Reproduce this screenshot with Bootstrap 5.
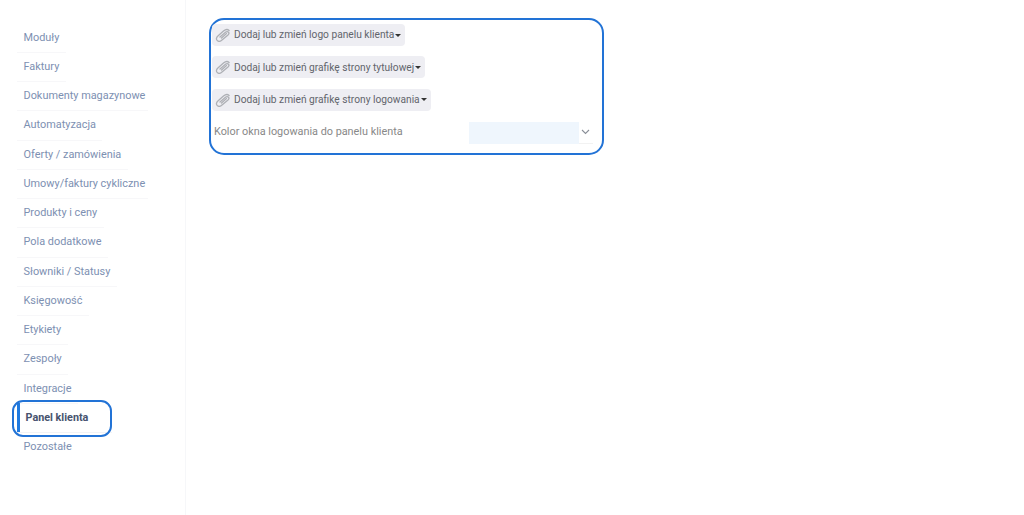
<!DOCTYPE html>
<html lang="pl">
<head>
<meta charset="utf-8">
<title>Panel klienta</title>
<link href="https://cdn.jsdelivr.net/npm/bootstrap@5.3.0/dist/css/bootstrap.min.css" rel="stylesheet">
<style>
html,body{height:515px;overflow:hidden;background:#fff}
body{font-family:Roboto,"Liberation Sans",sans-serif;font-size:11px;color:#666}
.shell{height:515px}
.side-col{width:186px;flex:none;border-right:1px solid #f6f7f9;padding:23.5px 0 0 17px}
.side-list{width:fit-content;min-width:0}
.side-item{display:block;width:fit-content;height:29.27px;line-height:27.5px;padding:0 6.5px;font-size:10.9px;color:#7d90b2;text-decoration:none;border-bottom:1px solid #f7f7f9}
.side-item.last{border-bottom:0}
.side-item.wide{padding-right:3px}
.side-active{position:relative;color:#47536e;font-weight:700;font-size:10.8px;padding-left:8.5px;padding-right:24px;border-bottom:1px solid #f2f3f6}
.side-active::before{content:"";position:absolute;left:0;top:-1px;bottom:0;width:3px;background:#1f7ae0}
.side-ring{position:absolute;left:-5px;top:-4px;width:100px;height:37px;border:2px solid #2273d6;border-radius:11px;pointer-events:none}
.main-col{padding:18px 0 0 23px}
.frame{width:395px;height:137px;border:2px solid #2273d6;border-radius:15px;padding:4px 1px 0 1px}
.file-btn{display:inline-flex;align-items:center;height:22px;padding:0 4px 0 3px;background:#eeeef3;border:0;border-radius:4px;font-size:10.2px;color:#62656c;white-space:nowrap}
.file-btn svg{margin-right:3px;flex:none}
.caret-mark{width:0;height:0;margin-left:1px;border-left:3px solid transparent;border-right:3px solid transparent;border-top:3px solid #333}
.btn-stack{display:flex;flex-direction:column;align-items:flex-start;gap:10.3px}
.color-row{height:23px;margin-top:10.500px;padding-left:2px}
.color-label{width:255px;flex:none;font-size:10.85px;color:#888}
.color-field{width:110px;height:22px;background:#eff6fd;flex:none}
.color-arrow{flex:1;height:22px;display:flex;align-items:center;padding-left:2px;border-bottom:1px solid #f2f2f2;margin-right:8px}
</style>
</head>
<body>
<div class="shell d-flex">
  <nav class="side-col">
    <div class="side-list position-relative">
      <a class="side-item" href="#">Moduły</a>
      <a class="side-item" href="#">Faktury</a>
      <a class="side-item wide" href="#">Dokumenty magazynowe</a>
      <a class="side-item" href="#">Automatyzacja</a>
      <a class="side-item" href="#">Oferty / zamówienia</a>
      <a class="side-item wide" href="#">Umowy/faktury cykliczne</a>
      <a class="side-item" href="#">Produkty i ceny</a>
      <a class="side-item" href="#">Pola dodatkowe</a>
      <a class="side-item" href="#">Słowniki / Statusy</a>
      <a class="side-item" href="#">Księgowość</a>
      <a class="side-item" href="#">Etykiety</a>
      <a class="side-item" href="#">Zespoły</a>
      <a class="side-item" href="#">Integracje</a>
      <div class="position-relative">
        <a class="side-item side-active" href="#">Panel klienta</a>
        <span class="side-ring"></span>
      </div>
      <a class="side-item last" href="#">Pozostałe</a>
    </div>
  </nav>
  <main class="main-col flex-grow-1">
    <div class="frame">
      <div class="btn-stack">
        <button class="file-btn" type="button"><svg width="16" height="14" viewBox="0 0 16 14" fill="none" stroke="#aeb0b5" stroke-width="1.3" stroke-linecap="round"><path d="M5 9 10.500 4.200c1-.9 2.300-.8 3 0 .7.800.5 1.900-.5 2.800L7 12c-1.700 1.500-3.800 1.600-4.900.4-1.100-1.200-.8-3 .8-4.400L8.500 3.100c2-1.700 4.200-1.900 5.600-.6"/><path d="M6.500 10 11.500 5.600"/></svg>Dodaj lub zmień logo panelu klienta<span class="caret-mark"></span></button>
        <button class="file-btn" type="button"><svg width="16" height="14" viewBox="0 0 16 14" fill="none" stroke="#aeb0b5" stroke-width="1.3" stroke-linecap="round"><path d="M5 9 10.500 4.200c1-.9 2.300-.8 3 0 .7.800.5 1.900-.5 2.800L7 12c-1.700 1.500-3.800 1.600-4.900.4-1.100-1.200-.8-3 .8-4.400L8.500 3.100c2-1.700 4.200-1.900 5.600-.6"/><path d="M6.500 10 11.500 5.600"/></svg>Dodaj lub zmień grafikę strony tytułowej<span class="caret-mark"></span></button>
        <button class="file-btn" type="button"><svg width="16" height="14" viewBox="0 0 16 14" fill="none" stroke="#aeb0b5" stroke-width="1.3" stroke-linecap="round"><path d="M5 9 10.500 4.200c1-.9 2.300-.8 3 0 .7.800.5 1.900-.5 2.800L7 12c-1.700 1.500-3.800 1.600-4.900.4-1.100-1.200-.8-3 .8-4.400L8.500 3.100c2-1.700 4.200-1.900 5.600-.6"/><path d="M6.500 10 11.500 5.600"/></svg>Dodaj lub zmień grafikę strony logowania<span class="caret-mark"></span></button>
      </div>
      <div class="color-row d-flex align-items-center">
        <div class="color-label">Kolor okna logowania do panelu klienta</div>
        <div class="color-field"></div>
        <div class="color-arrow"><svg width="9" height="6" viewBox="0 0 9 6" fill="none" stroke="#8a8f98" stroke-width="1.1"><path d="M1 1l3.500 3.500L8 1"/></svg></div>
      </div>
    </div>
  </main>
</div>
<script src="https://cdn.jsdelivr.net/npm/bootstrap@5.3.0/dist/js/bootstrap.bundle.min.js"></script>
</body>
</html>
